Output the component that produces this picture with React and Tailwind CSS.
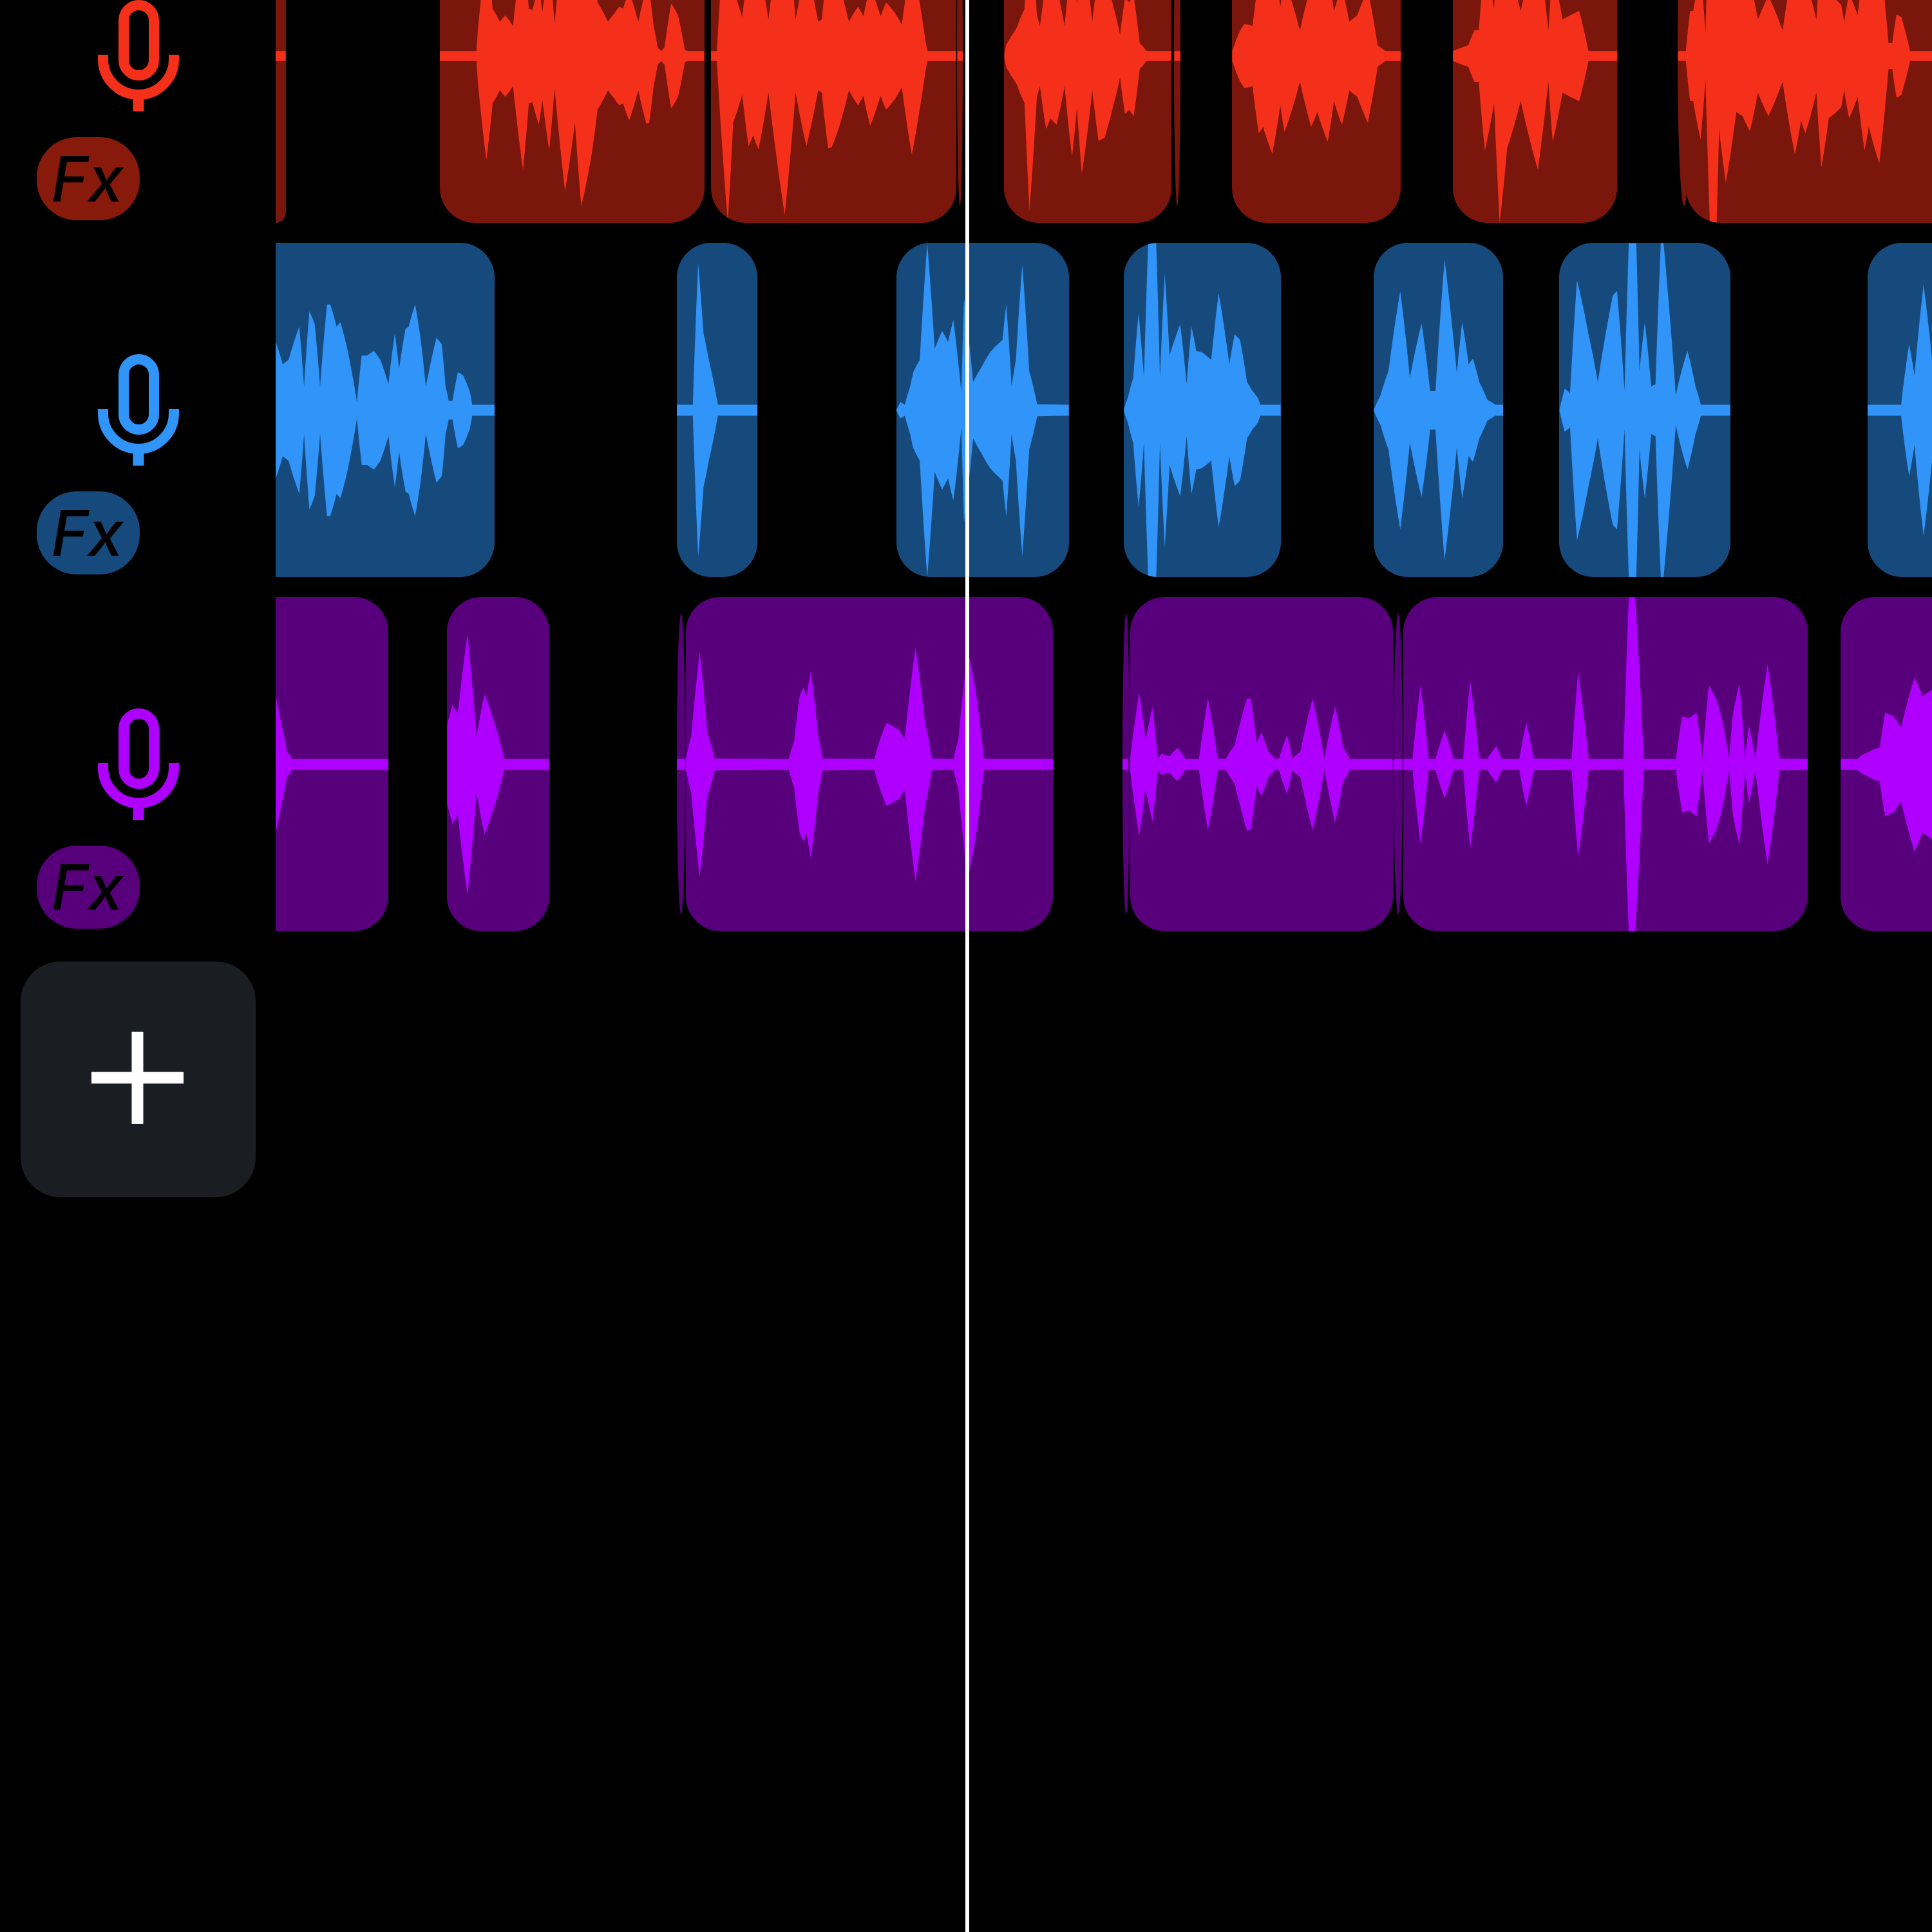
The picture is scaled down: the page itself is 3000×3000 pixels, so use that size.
// lane geometry: every lane is 519px tall, wave is mirrored around its middle
const LANE_H = 519;

// outlines were traced from crops, so they carry the crop scale with them
const red = (x0, sx) => (pts) => pts.map(([x, y]) => [x0 + x / sx, (y - 260) / 3]);
const tall = (x0) => (pts) => pts.map(([x, y]) => [x0 + x / 1.206, (y - 773) / 2.904]);

const r2 = red(400, 1.4245);
const r3 = red(1500, 1.045);
const a4 = tall(400);
const a5 = tall(1700);

// flanks of the peaks bow outwards a little, so each step is a curve
function wavePath(points) {
  const step = ([x1, h1], [x2, h2], sign) => {
    const cx = (x1 + x2) / 2;
    const ch = (h1 + h2) / 2 + Math.abs(h1 - h2) * 0.07;
    return `Q${cx},${sign * ch} ${x2},${sign * h2}`;
  };
  const [first] = points;
  let d = `M${first[0]},${-first[1]}`;
  for (let i = 1; i < points.length; i++) d += step(points[i - 1], points[i], -1);
  const last = points[points.length - 1];
  d += `L${last[0]},${last[1]}`;
  for (let i = points.length - 2; i >= 0; i--) d += step(points[i + 1], points[i], 1);
  return d + "Z";
}

const lanes = [
  {
    name: "red",
    text: "text-[#f5301a]",
    fill: "fill-[#f5301a]",
    clip: "bg-[#7a160b]",
    fx: "bg-[#881a0c]",
    clips: [
      { x: 428, end: 444, square: "rounded-l-none", wave: r2([[40, 283], [62, 283]]) },
      {
        x: 683,
        end: 1094,
        wave: r2([[403, 283], [484, 283], [488, 400], [506, 745], [520, 480], [536, 420], [548, 450], [565, 400], [587, 790], [600, 480], [608, 475], [622, 580], [630, 465], [645, 700], [657, 410], [680, 890], [702, 570], [716, 960], [738, 730], [752, 510], [775, 420], [790, 460], [800, 490], [808, 480], [822, 560], [842, 420], [860, 575], [866, 572], [876, 400], [885, 300], [893, 283], [900, 300], [915, 505], [930, 450], [945, 290], [950, 283], [988, 283]]),
      },
      {
        x: 1104,
        end: 1485,
        wave: r2([[1003, 283], [1016, 283], [1025, 600], [1040, 1030], [1052, 570], [1072, 440], [1086, 680], [1096, 630], [1108, 695], [1130, 430], [1166, 1000], [1190, 430], [1214, 680], [1240, 420], [1248, 430], [1262, 690], [1270, 685], [1285, 600], [1308, 420], [1328, 490], [1340, 445], [1355, 585], [1378, 445], [1390, 510], [1410, 460], [1425, 405], [1447, 720], [1465, 500], [1478, 320], [1482, 283], [1545, 283]]),
      },
      { x: 1486, end: 1495, sliver: true, wave: r2([[1548, 283], [1566, 283]]) },
      {
        x: 1559,
        end: 1819,
        wave: r3([[62, 255], [65, 310], [82, 390], [95, 480], [103, 980], [115, 450], [120, 400], [130, 600], [137, 550], [147, 580], [160, 400], [172, 730], [180, 500], [188, 810], [205, 420], [215, 655], [225, 640], [240, 480], [250, 360], [258, 530], [265, 510], [272, 540], [282, 320], [293, 283], [333, 283]]),
      },
      { x: 1823, end: 1833, sliver: true, wave: r3([[338, 283], [348, 283]]) },
      {
        x: 1913,
        end: 2175,
        wave: r3([[432, 283], [445, 380], [452, 410], [465, 400], [475, 620], [482, 590], [497, 715], [510, 490], [517, 615], [542, 380], [560, 590], [570, 520], [587, 660], [597, 470], [610, 580], [622, 420], [635, 450], [652, 570], [668, 310], [680, 283], [706, 283]]),
      },
      {
        x: 2256,
        end: 2511,
        wave: r3([[790, 283], [815, 310], [825, 380], [832, 380], [842, 700], [857, 480], [866, 1040], [878, 690], [900, 470], [928, 790], [945, 380], [952, 660], [968, 430], [995, 470], [1010, 283], [1057, 283]]),
      },
      { x: 2605, end: 2625, sliver: true, wave: r3([[1155, 283], [1180, 283]]) },
      {
        x: 2618,
        end: 3000,
        square: "rounded-r-none",
        wave: r3([[1168, 283], [1175, 470], [1180, 470], [1192, 650], [1200, 370], [1207, 1040], [1218, 1040], [1222, 600], [1233, 850], [1250, 520], [1260, 540], [1272, 610], [1285, 430], [1302, 540], [1325, 380], [1345, 720], [1355, 560], [1362, 620], [1380, 430], [1388, 780], [1400, 550], [1420, 500], [1425, 420], [1433, 550], [1447, 450], [1458, 700], [1465, 590], [1482, 760], [1497, 320], [1503, 320], [1510, 455], [1518, 440], [1532, 283], [1568, 283]]),
      },
    ],
  },
  {
    name: "blue",
    text: "text-[#3094f8]",
    fill: "fill-[#3094f8]",
    clip: "bg-[#174a7c]",
    fx: "bg-[#174a7c]",
    clips: [
      {
        x: 428,
        end: 768,
        square: "rounded-l-none",
        wave: a4([[34, 1080], [47, 980], [58, 1000], [78, 1150], [87, 880], [97, 1220], [107, 1160], [117, 880], [130, 1250], [136, 1250], [148, 1150], [155, 1170], [168, 1050], [186, 810], [195, 1020], [205, 1020], [218, 1040], [230, 1000], [245, 890], [257, 1120], [265, 960], [277, 1140], [283, 1150], [295, 1250], [305, 1100], [315, 880], [335, 1100], [345, 1070], [352, 880], [358, 815], [365, 815], [375, 945], [385, 930], [397, 860], [402, 798], [445, 798]]),
      },
      {
        x: 1051,
        end: 1176,
        wave: a4([[785, 798], [815, 798], [825, 1435], [835, 1120], [845, 1000], [862, 798], [936, 798]]),
      },
      {
        x: 1392,
        end: 1660,
        wave: a4([[1196, 773], [1204, 810], [1212, 798], [1222, 880], [1228, 945], [1240, 1000], [1254, 1525], [1268, 1050], [1282, 1130], [1293, 1080], [1303, 1180], [1318, 850], [1323, 1280], [1340, 900], [1355, 965], [1372, 1035], [1395, 1090], [1402, 1250], [1412, 880], [1420, 1000], [1432, 1430], [1445, 950], [1460, 800], [1519, 798]]),
      },
      {
        x: 1745,
        end: 1989,
        wave: a5([[54, 773], [62, 830], [72, 920], [82, 1210], [92, 920], [100, 1528], [115, 1528], [122, 920], [131, 1390], [140, 1020], [160, 1160], [172, 890], [181, 1150], [190, 1040], [200, 1035], [218, 1000], [232, 1300], [245, 1100], [252, 980], [262, 1115], [272, 1090], [285, 900], [295, 860], [305, 830], [310, 798], [348, 798]]),
      },
      {
        x: 2133,
        end: 2334,
        wave: a5([[522, 773], [535, 840], [550, 950], [572, 1310], [590, 920], [612, 1165], [628, 860], [638, 860], [655, 1450], [678, 940], [688, 1170], [700, 980], [708, 1005], [720, 900], [735, 820], [750, 798], [765, 798]]),
      },
      {
        x: 2421,
        end: 2687,
        wave: a5([[870, 773], [880, 870], [890, 850], [903, 1360], [925, 1110], [942, 900], [970, 1290], [978, 1310], [992, 860], [1000, 1528], [1014, 1528], [1020, 950], [1030, 1170], [1042, 880], [1050, 890], [1060, 1528], [1065, 1528], [1088, 840], [1100, 960], [1110, 1040], [1125, 880], [1135, 798], [1190, 798]]),
      },
      {
        x: 2900,
        end: 3000,
        square: "rounded-r-none",
        wave: a5([[1447, 798], [1510, 798], [1515, 900], [1525, 1070], [1535, 930], [1552, 1340], [1568, 1000]]),
      },
    ],
  },
  {
    name: "purple",
    text: "text-[#af00ff]",
    fill: "fill-[#af00ff]",
    clip: "bg-[#58007c]",
    fx: "bg-[#58007c]",
    clips: [
      {
        x: 428,
        end: 603,
        square: "rounded-l-none",
        wave: a4([[34, 1080], [45, 950], [55, 830], [65, 798], [245, 798]]),
      },
      {
        x: 694,
        end: 853,
        wave: a4([[355, 950], [365, 1040], [375, 1000], [393, 1360], [410, 900], [425, 1090], [445, 950], [462, 798], [546, 798]]),
      },
      { x: 1051, end: 1064, sliver: true, wave: a4([[785, 798], [802, 798]]) },
      {
        x: 1065,
        end: 1635,
        wave: a4([[802, 798], [812, 900], [828, 1280], [842, 920], [856, 800], [995, 798], [1005, 880], [1015, 1080], [1022, 1120], [1028, 1080], [1036, 1195], [1050, 900], [1058, 800], [1155, 798], [1165, 880], [1178, 960], [1200, 930], [1212, 890], [1232, 1300], [1250, 960], [1263, 800], [1303, 798], [1312, 880], [1330, 1290], [1345, 1100], [1360, 800], [1375, 798], [1490, 798]]),
      },
      { x: 1743, end: 1754, sliver: true, wave: a5([[52, 798], [62, 798]]) },
      {
        x: 1755,
        end: 2163,
        wave: a5([[66, 798], [75, 960], [83, 1095], [95, 880], [108, 1030], [118, 800], [125, 820], [140, 810], [155, 848], [170, 798], [195, 798], [212, 1070], [230, 800], [245, 798], [262, 860], [285, 1070], [292, 1070], [303, 870], [312, 915], [325, 830], [338, 798], [345, 800], [360, 905], [370, 800], [385, 830], [408, 1070], [430, 798], [450, 1035], [465, 850], [478, 798], [558, 798]]),
      },
      { x: 2164, end: 2178, sliver: true, wave: a5([[558, 798], [578, 798]]) },
      {
        x: 2179,
        end: 2807,
        wave: a5([[578, 798], [595, 798], [610, 1130], [625, 800], [638, 798], [655, 925], [672, 798], [690, 798], [703, 1150], [720, 800], [735, 798], [752, 855], [762, 798], [795, 798], [808, 960], [822, 800], [893, 798], [905, 1190], [925, 798], [990, 798], [1000, 1528], [1012, 1528], [1028, 798], [1088, 798], [1100, 990], [1112, 980], [1127, 1005], [1138, 800], [1150, 1130], [1165, 1060], [1175, 970], [1188, 798], [1195, 1000], [1207, 1135], [1218, 800], [1225, 950], [1237, 798], [1260, 1225], [1282, 800], [1335, 798]]),
      },
      {
        x: 2858,
        end: 3000,
        square: "rounded-r-none",
        wave: a5([[1397, 798], [1428, 798], [1437, 815], [1450, 830], [1458, 840], [1470, 850], [1480, 1005], [1495, 990], [1510, 940], [1535, 1165], [1550, 1080], [1568, 1110]]),
      },
    ],
  },
];

function MicIcon({ className }) {
  return (
    <svg width="126" height="173" viewBox="0 0 126 173" fill="none" stroke="currentColor" strokeWidth="16" className={className}>
      <rect x="40" y="8" width="47" height="109" rx="23.500" />
      <path d="M8 85v7a55 55 0 0 0 110 0v-7" />
      <path d="M63 150v23" strokeWidth="17" />
    </svg>
  );
}

function Clip({ clip, lane }) {
  const w = clip.end - clip.x;
  const shape = clip.sliver ? "top-[26px] bottom-[26px] rounded-[50%]" : "top-0 bottom-0 rounded-[54px]";

  return (
    <div
      className={`absolute overflow-hidden ${shape} ${lane.clip} ${clip.square || ""}`}
      style={{ left: clip.x - 428, width: w }}
    >
      <svg
        className="absolute left-0 top-1/2 -translate-y-1/2"
        width={w}
        height={LANE_H}
        viewBox={`${clip.x} ${-LANE_H / 2} ${w} ${LANE_H}`}
      >
        <path d={wavePath(clip.wave)} className={lane.fill} />
      </svg>
    </div>
  );
}

function Lane({ lane }) {
  return (
    <div className="flex h-[519px]">
      <div className="w-[428px] shrink-0 pt-[173px]">
        <MicIcon className={`ml-[152px] ${lane.text}`} />
        <div
          className={`ml-[57px] mt-[40px] flex h-[129px] w-[160px] items-center justify-center rounded-[62px] pr-[3px] font-['Inter',sans-serif] text-[98px] leading-none font-medium italic text-black ${lane.fx}`}
        >
          Fx
        </div>
      </div>
      <div className="relative flex-1">
        {lane.clips.map((clip) => (
          <Clip key={clip.x} clip={clip} lane={lane} />
        ))}
      </div>
    </div>
  );
}

export default function App() {
  return (
    <div className="relative h-[3000px] w-[3000px] overflow-hidden bg-black">
      <div className="-mt-[173px] flex flex-col gap-[31px]">
        {lanes.map((lane) => (
          <Lane key={lane.name} lane={lane} />
        ))}
      </div>

      <div className="ml-[32px] mt-[47px] flex h-[366px] w-[365px] items-center justify-center rounded-[62px] bg-[#1a1d21] pb-[6px] pr-[3px]">
        <svg width="143" height="143" viewBox="0 0 143 143" fill="none" stroke="#fff" strokeWidth="18">
          <path d="M71.500 0v143M0 71.500h143" />
        </svg>
      </div>

      {/* playhead */}
      <div className="absolute bottom-0 left-[1499px] top-0 w-[6px] bg-white" />
    </div>
  );
}
